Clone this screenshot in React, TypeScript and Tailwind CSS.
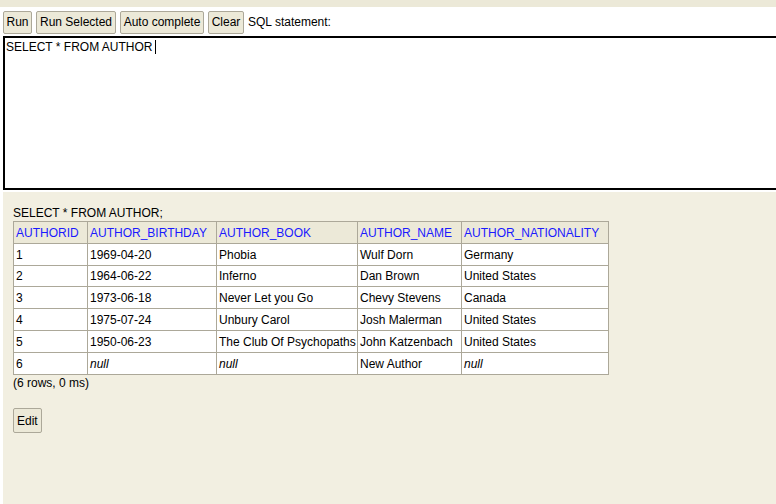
import React from "react";

const rows = [
  ["1", "1969-04-20", "Phobia", "Wulf Dorn", "Germany"],
  ["2", "1964-06-22", "Inferno", "Dan Brown", "United States"],
  ["3", "1973-06-18", "Never Let you Go", "Chevy Stevens", "Canada"],
  ["4", "1975-07-24", "Unbury Carol", "Josh Malerman", "United States"],
  ["5", "1950-06-23", "The Club Of Psychopaths", "John Katzenbach", "United States"],
  ["6", null, null, "New Author", null],
];

const headers = ["AUTHORID", "AUTHOR_BIRTHDAY", "AUTHOR_BOOK", "AUTHOR_NAME", "AUTHOR_NATIONALITY"];
const widths = ["w-[74px]", "w-[129px]", "w-[141px]", "w-[104px]", "w-[147px]"];

function Btn({ label, w }: { label: string; w: string }) {
  return (
    <button className={`${w} h-[23px] p-0 text-center bg-[#ece9d8] border border-[#aca899] rounded-[2px] text-[12px] text-black leading-none`}>
      {label}
    </button>
  );
}

export default function App() {
  return (
    <div className="w-[776px] h-[504px] overflow-hidden bg-white flex flex-col font-['Liberation_Sans',Arial,sans-serif] text-[12px] text-black">
      <div className="h-[7px] bg-[#ece9d8] shrink-0" />
      <div className="h-[29px] shrink-0 flex items-center gap-1 pl-[3px] pt-[1px]">
        <Btn label="Run" w="w-[29px]" />
        <Btn label="Run Selected" w="w-[80px]" />
        <Btn label="Auto complete" w="w-[84px]" />
        <Btn label="Clear" w="w-[36px]" />
        <span>SQL statement:</span>
      </div>
      <div className="ml-[3px] w-[820px] h-[154px] shrink-0 border-2 border-black bg-white px-[1px] pt-0">
        <span>SELECT * FROM AUTHOR</span>
        <span className="inline-block w-px h-[14px] bg-black align-[-3px] ml-[3px]" />
      </div>
      <div className="h-[2px] shrink-0" />
      <div className="ml-[3px] flex-1 bg-[#f2efe1] pl-[10px] pt-[13px]">
        <div className="h-[16px] leading-[16px]">SELECT * FROM AUTHOR;</div>
        <table className="border-collapse border border-[#aca899]">
          <thead>
            <tr>
              {headers.map((h, i) => (
                <th
                  key={h}
                  className={`${widths[i]} h-[22px] p-0 pl-[2px] border border-[#aca899] bg-[#ece9d8] text-left font-normal text-[#1a1aff]`}
                >
                  {h}
                </th>
              ))}
            </tr>
          </thead>
          <tbody>
            {rows.map((r, ri) => (
              <tr key={r[0] as string} className="bg-white">
                {r.map((c, i) => (
                  <td
                    key={i}
                    className={`${widths[i]} ${ri === 1 ? "h-[21px]" : "h-[22px]"} p-0 pl-[2px] border border-[#aca899] whitespace-nowrap`}
                  >
                    {c === null ? <i>null</i> : c}
                  </td>
                ))}
              </tr>
            ))}
          </tbody>
        </table>
        <div className="h-[15px] leading-[15px] mt-px">(6 rows, 0 ms)</div>
        <button className="mt-[17px] h-[25px] px-[3px] bg-[#ece9d8] border border-[#aca899] rounded-[2px] text-[12px] text-black leading-none">
          Edit
        </button>
      </div>
    </div>
  );
}
